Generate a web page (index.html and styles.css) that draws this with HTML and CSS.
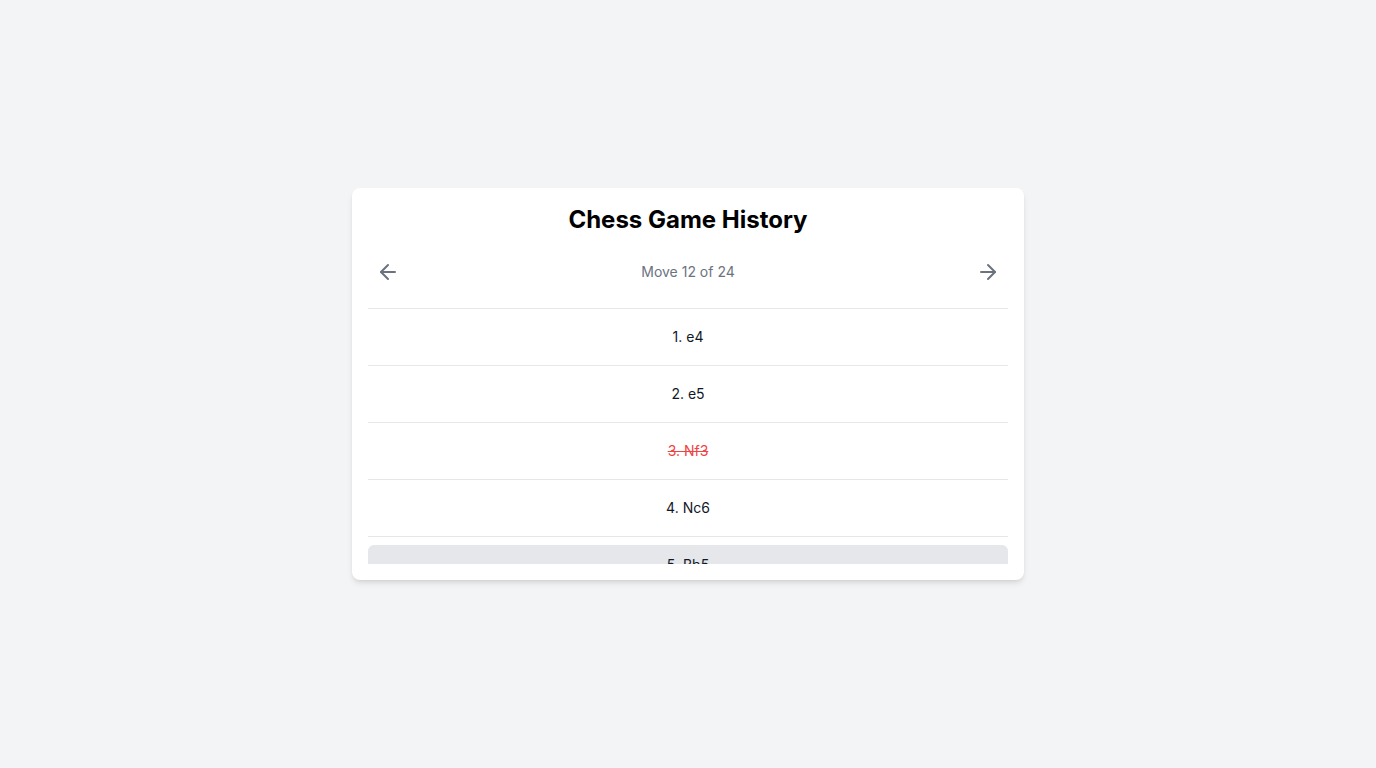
FILE: index.html
```html
<!DOCTYPE html>
<html lang="en">
<head>
<meta charset="utf-8">
<title>Chess Game History</title>
<link rel="stylesheet" href="styles.css">
</head>
<body>
<main class="card">
  <h1 class="title">Chess Game History</h1>
  <div class="nav">
    <button class="nav-btn" aria-label="Previous move">
      <svg width="24" height="24" viewBox="0 0 24 24" fill="none" stroke="currentColor" stroke-width="2" stroke-linecap="round" stroke-linejoin="round"><path d="m12 19-7-7 7-7"/><path d="M19 12H5"/></svg>
    </button>
    <span class="counter">Move 12 of 24</span>
    <button class="nav-btn" aria-label="Next move">
      <svg width="24" height="24" viewBox="0 0 24 24" fill="none" stroke="currentColor" stroke-width="2" stroke-linecap="round" stroke-linejoin="round"><path d="M5 12h14"/><path d="m12 5 7 7-7 7"/></svg>
    </button>
  </div>
  <ul class="moves">
    <li class="move">1. e4</li>
    <li class="move">2. e5</li>
    <li class="move mistake">3. Nf3</li>
    <li class="move">4. Nc6</li>
    <li class="move current">5. Bb5</li>
    <li class="move">6. a6</li>
    <li class="move">7. Ba4</li>
  </ul>
</main>
</body>
</html>
```
FILE: styles.css
```css
* { box-sizing: border-box; }
html, body { margin: 0; padding: 0; }
body {
  background: #f3f4f6;
  font-family: Inter, "Noto Sans", "Liberation Sans", sans-serif;
  color: #111827;
  min-height: 100vh;
  display: flex;
  align-items: center;
  justify-content: center;
}
.card {
  width: 672px;
  background: #fff;
  border-radius: 8px;
  box-shadow: 0 4px 6px -1px rgba(0,0,0,0.1), 0 2px 4px -2px rgba(0,0,0,0.1);
  padding: 16px;
}
.title {
  margin: 0 0 16px;
  font-size: 24px;
  line-height: 32px;
  font-weight: 700;
  text-align: center;
  color: #000;
}
.nav {
  display: flex;
  align-items: center;
  justify-content: space-between;
  margin-bottom: 16px;
}
.nav-btn {
  border: 0;
  background: transparent;
  padding: 8px;
  width: 40px;
  height: 40px;
  color: #6b7280;
  display: flex;
  align-items: center;
  justify-content: center;
  border-radius: 9999px;
  cursor: pointer;
}
.counter {
  font-size: 14px;
  line-height: 20px;
  color: #6b7280;
}
.moves {
  list-style: none;
  margin: 0;
  padding: 0;
  border-top: 1px solid #e5e7eb;
  max-height: 256px;
  overflow: hidden;
}
.move {
  padding: 16px;
  font-size: 14px;
  line-height: 24px;
  text-align: center;
  color: #111827;
  border-bottom: 1px solid #e5e7eb;
}
.mistake {
  color: #ef4444;
  text-decoration: line-through;
}
.current {
  margin-top: 8px;
  padding: 8px 16px;
  background: #e5e7eb;
  border-radius: 6px;
}
```
